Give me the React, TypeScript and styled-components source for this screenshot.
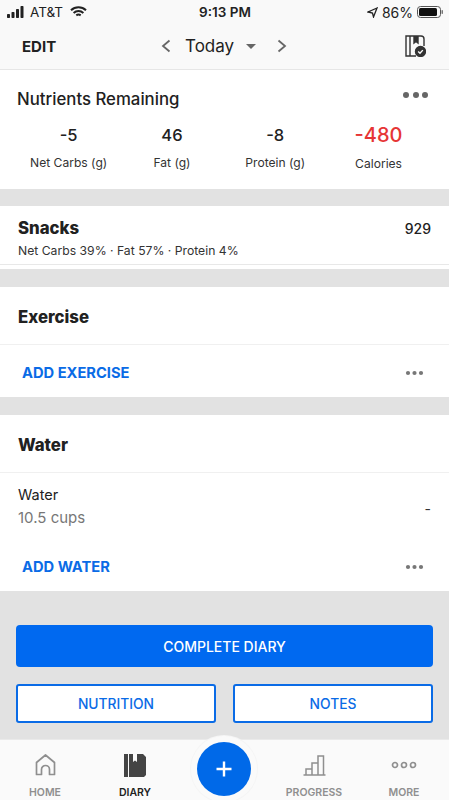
import React from "react";
import styled, { createGlobalStyle } from "styled-components";

const Global = createGlobalStyle`
  html, body { margin: 0; padding: 0; background: #e2e2e2; }
  body { font-family: "Inter", "Liberation Sans", sans-serif; color: #212121; }
  * { box-sizing: border-box; }
`;
const Screen = styled.div`
  width: 449px; height: 800px; overflow: hidden; display: flex; flex-direction: column; background: #e2e2e2;
`;
const TopArea = styled.header`
  height: 70px; background: #f9f9f9; border-bottom: 1px solid #e6e6e6; display: flex; flex-direction: column;
`;
const StatusBar = styled.div`
  height: 24px; display: grid; grid-template-columns: 1fr auto 1fr; align-items: center; padding: 0 5px 0 6px; font-size: 13.5px; color: #222;
`;
const StatusLeft = styled.div`display: flex; align-items: center; gap: 5px;`;
const StatusTime = styled.div`font-weight: 600; font-size: 13.5px;`;
const StatusRight = styled.div`display: flex; align-items: center; justify-content: flex-end; gap: 4px; font-size: 14px;`;
const NavRow = styled.div`
  flex: 1; display: flex; align-items: center; padding: 0 23px 1px 22px;
`;
const EditLabel = styled.div`font-weight: 700; font-size: 15px; width: 60px; flex: none;`;
const DateNav = styled.div`display: flex; align-items: center; color: #222; margin-left: 79px;`;
const DateText = styled.span`font-size: 17px; margin: 0 12px 0 14px; font-weight: 400;`;
const SaveIcon = styled.div`display: flex; margin-left: auto;`;
const Section = styled.section`background: #fff; display: flex; flex-direction: column;`;
const NutrientCard = styled(Section)`height: 119px; padding: 19px 4px 0 17px; margin-bottom: 17px;`;
const CardHead = styled.div`display: flex; justify-content: space-between;`;
const CardTitle = styled.div`font-size: 16.8px; font-weight: 500; line-height: 20px;`;
const MoreDots = styled.div`display: flex; gap: 3.5px; padding: 3px 17px 0 0;`;
const Dot = styled.i<{ $s: number; $c: string }>`
  display: block; width: ${(p) => p.$s}px; height: ${(p) => p.$s}px; border-radius: 50%; background: ${(p) => p.$c};
`;
const Stats = styled.div`display: grid; grid-template-columns: repeat(4, 103.3px); margin: 14px 0 0 0;`;
const Stat = styled.div`display: flex; flex-direction: column; align-items: center;`;
const StatValue = styled.div<{ $alert?: boolean }>`
  height: 24px; line-height: 24px; font-size: ${(p) => (p.$alert ? 20 : 16.5)}px; font-weight: 500;
  color: ${(p) => (p.$alert ? "#e63535" : "#212121")};
`;
const StatLabel = styled.div<{ $low?: boolean }>`
  font-size: 12.1px; color: #333; margin-top: ${(p) => (p.$low ? 9 : 8)}px; line-height: 16px;
`;
const SnackCard = styled(Section)`height: 63px; margin-bottom: 18px;`;
const SnackBody = styled.div`height: 59px; padding: 12px 18px 0; border-bottom: 1px solid #e8e8e8;`;
const SnackRow = styled.div`display: flex; justify-content: space-between; align-items: center;`;
const SectionTitle = styled.div`font-weight: 800; font-size: 16.8px; line-height: 20px;`;
const SnackCal = styled.div`font-size: 14px; font-weight: 500;`;
const SnackSub = styled.div`font-size: 12.2px; color: #333; margin-top: 5px; line-height: 16px;`;
const PlainCard = styled(Section)<{ $gap?: boolean }>`margin-bottom: ${(p) => (p.$gap ? 18 : 0)}px;`;
const TitleRow = styled.div`height: 58px; display: flex; align-items: center; padding: 2px 18px 0; border-bottom: 1px solid #f0f0f0;`;
const ActionRow = styled.div`height: 52px; display: flex; align-items: center; justify-content: space-between; padding: 3px 25px 0 22px;`;
const ActionLink = styled.div`color: #0a6be6; font-size: 14.7px; font-weight: 700;`;
const WaterRow = styled.div`height: 66px; display: flex; align-items: center; justify-content: space-between; padding: 0 18px;`;
const WaterInfo = styled.div`display: flex; flex-direction: column; gap: 5px; font-size: 14.5px; line-height: 18px;`;
const WaterAmount = styled.span`color: #777; font-size: 15px;`;
const Dash = styled.span`font-size: 14px; color: #333; padding-top: 4px;`;
const ButtonArea = styled.div`flex: 1; display: flex; flex-direction: column; gap: 17px; padding: 34px 16px 0;`;
const PrimaryButton = styled.div`
  height: 42px; background: #0069f0; border-radius: 4px; color: #fff; font-size: 14px; font-weight: 500;
  display: flex; align-items: center; justify-content: center;
`;
const ButtonRow = styled.div`display: grid; grid-template-columns: 200px 200px; justify-content: space-between;`;
const OutlineButton = styled.div`
  height: 39px; background: #fff; border: 2px solid #0a6be6; border-radius: 3px; color: #0a6be6; font-size: 13.8px; font-weight: 500;
  display: flex; align-items: center; justify-content: center;
`;
const TabBar = styled.nav`
  position: relative; height: 61px; flex: none; background: #fafafa; display: grid;
  grid-template-columns: 90px 90px 89px 90px 90px; border-top: 1px solid #eaeaea;
`;
const Tab = styled.div<{ $active?: boolean }>`
  display: flex; flex-direction: column; align-items: center; height: 100%; padding-top: 10px;
  color: ${(p) => (p.$active ? "#212121" : "#8f8f8f")}; font-size: 10.5px; font-weight: 600;
`;
const TabIcon = styled.div`height: 30px; display: flex; align-items: center; justify-content: center; margin-bottom: 6px;`;
const Fab = styled.div`
  position: absolute; left: 197px; top: 2px; width: 54px; height: 54px; border-radius: 50%; background: #0069e8;
  box-shadow: 0 0 0 6px #fafafa, 0 0 0 7px #f5f5f5; display: flex; align-items: center; justify-content: center;
`;

const Dots = () => (
  <svg width="19" height="6" viewBox="0 0 19 6"><circle cx="3" cy="3" r="2.1" fill="#777" /><circle cx="9.5" cy="3" r="2.1" fill="#777" /><circle cx="16" cy="3" r="2.1" fill="#777" /></svg>
);
const Chevron = ({ right }: { right?: boolean }) => (
  <svg width="10" height="14" viewBox="0 0 10 14" fill="none" stroke="#666" strokeWidth="1.8">
    <path d={right ? "M1.5 1.5 8 7l-6.500 5.500" : "M8.500 1.500 2 7l6.500 5.500"} />
  </svg>
);

export default function App() {
  return (
    <Screen>
      <Global />
      <TopArea>
        <StatusBar>
          <StatusLeft>
            <svg width="19" height="12" viewBox="0 0 19 12" fill="#222"><rect x="1" y="8" width="3" height="4" rx=".7" /><rect x="5.500" y="6" width="3" height="6" rx=".7" /><rect x="10" y="3" width="3" height="9" rx=".7" /><rect x="14.500" y="0" width="3" height="12" rx=".7" /></svg>
            <span>AT&amp;T</span>
            <svg width="17" height="12" viewBox="0 0 17 12" fill="none" stroke="#222" strokeWidth="2" style={{ marginLeft: 2 }}><path d="M1 4.200c4.200-4 10.800-4 15 0M3.600 6.900c2.800-2.500 7-2.500 9.800 0M6.300 9.400c1.300-1 3.100-1 4.400 0" /></svg>
          </StatusLeft>
          <StatusTime>9:13 PM</StatusTime>
          <StatusRight>
            <svg width="11" height="11" viewBox="0 0 11 11" fill="none" stroke="#222" strokeWidth="1.300"><path d="M10 1 1 5l4.500 1L6.500 10z" /></svg>
            <span>86%</span>
            <svg width="27" height="12" viewBox="0 0 27 12"><rect x=".5" y=".5" width="23" height="11" rx="3" fill="none" stroke="#555" /><rect x="2" y="2" width="18" height="8" rx="1.500" fill="#111" /><rect x="24.500" y="4" width="1.500" height="4" rx=".7" fill="#777" /></svg>
          </StatusRight>
        </StatusBar>
        <NavRow>
          <EditLabel>EDIT</EditLabel>
          <DateNav>
            <Chevron />
            <DateText>Today</DateText>
            <svg width="10" height="5" viewBox="0 0 10 5" fill="#666" style={{ marginRight: 21 }}><path d="M0 0h10L5 5z" /></svg>
            <Chevron right />
          </DateNav>
          <SaveIcon>
            <svg width="21" height="22" viewBox="0 0 21 22" fill="none" stroke="#333" strokeWidth="1.400">
              <path d="M11 21H1V1h15a3 3 0 0 1 3 3v7" />
              <path d="M5 1v20" />
              <path d="M9 1v7l2-1.600L13 8V1" fill="#333" />
              <circle cx="15.500" cy="16.500" r="5" fill="#333" />
              <path d="m13.200 16.500 1.800 1.800 2.800-3.200" stroke="#fff" />
            </svg>
          </SaveIcon>
        </NavRow>
      </TopArea>
      <NutrientCard>
        <CardHead>
          <CardTitle>Nutrients Remaining</CardTitle>
          <MoreDots>
            <Dot $s={6} $c="#666" /><Dot $s={6} $c="#666" /><Dot $s={6} $c="#666" />
          </MoreDots>
        </CardHead>
        <Stats>
          <Stat><StatValue>-5</StatValue><StatLabel>Net Carbs (g)</StatLabel></Stat>
          <Stat><StatValue>46</StatValue><StatLabel>Fat (g)</StatLabel></Stat>
          <Stat><StatValue>-8</StatValue><StatLabel>Protein (g)</StatLabel></Stat>
          <Stat><StatValue $alert>-480</StatValue><StatLabel $low>Calories</StatLabel></Stat>
        </Stats>
      </NutrientCard>
      <SnackCard>
        <SnackBody>
          <SnackRow><SectionTitle>Snacks</SectionTitle><SnackCal>929</SnackCal></SnackRow>
          <SnackSub>Net Carbs 39% · Fat 57% · Protein 4%</SnackSub>
        </SnackBody>
      </SnackCard>
      <PlainCard $gap>
        <TitleRow><SectionTitle>Exercise</SectionTitle></TitleRow>
        <ActionRow><ActionLink>ADD EXERCISE</ActionLink><Dots /></ActionRow>
      </PlainCard>
      <PlainCard>
        <TitleRow><SectionTitle>Water</SectionTitle></TitleRow>
        <WaterRow>
          <WaterInfo><span>Water</span><WaterAmount>10.5 cups</WaterAmount></WaterInfo>
          <Dash>-</Dash>
        </WaterRow>
        <ActionRow><ActionLink>ADD WATER</ActionLink><Dots /></ActionRow>
      </PlainCard>
      <ButtonArea>
        <PrimaryButton>COMPLETE DIARY</PrimaryButton>
        <ButtonRow>
          <OutlineButton>NUTRITION</OutlineButton>
          <OutlineButton>NOTES</OutlineButton>
        </ButtonRow>
      </ButtonArea>
      <TabBar>
        <Tab>
          <TabIcon>
            <svg width="21" height="22" viewBox="0 0 21 22" fill="none" stroke="#8f8f8f" strokeWidth="1.700"><path d="M1.500 20.500V8.500L10.500 1l9 7.500v12h-5v-5a4 4 0 0 0-8 0v5z" strokeLinejoin="round" /></svg>
          </TabIcon>
          HOME
        </Tab>
        <Tab $active>
          <TabIcon>
            <svg width="22" height="23" viewBox="0 0 22 23" fill="#444"><path d="M0 0h4v23H0zM5 0h4v8l2-1.500L13 8V0h6l3 3v18l-2 2H5z" /></svg>
          </TabIcon>
          DIARY
        </Tab>
        <Tab />
        <Tab>
          <TabIcon>
            <svg width="23" height="21" viewBox="0 0 23 21" fill="none" stroke="#8f8f8f" strokeWidth="1.500"><path d="M.5 20h22M3 20v-6h6v6M9 20V8h6v12M15 20V1h5.500v19" /></svg>
          </TabIcon>
          PROGRESS
        </Tab>
        <Tab>
          <TabIcon>
            <svg width="26" height="8" viewBox="0 0 26 8" fill="none" stroke="#8f8f8f" strokeWidth="1.700"><circle cx="4" cy="4" r="2.500" /><circle cx="13" cy="4" r="2.500" /><circle cx="22" cy="4" r="2.500" /></svg>
          </TabIcon>
          MORE
        </Tab>
        <Fab>
          <svg width="18" height="18" viewBox="0 0 18 18" stroke="#fff" strokeWidth="2.400"><path d="M9 1.500v15M1.500 9h15" /></svg>
        </Fab>
      </TabBar>
    </Screen>
  );
}
